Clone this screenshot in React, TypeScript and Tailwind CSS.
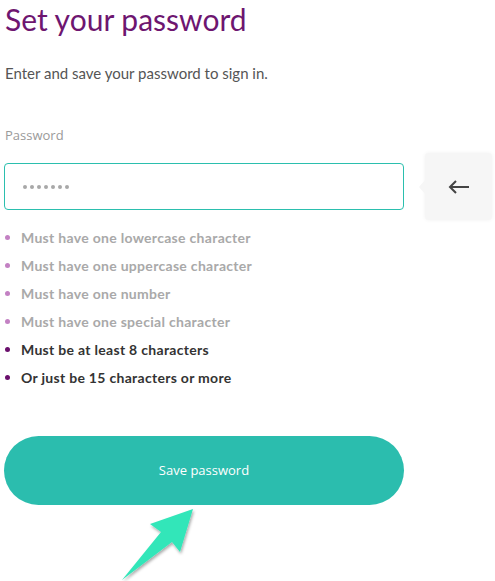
const rules = [
  { text: "Must have one lowercase character", done: false },
  { text: "Must have one uppercase character", done: false },
  { text: "Must have one number", done: false },
  { text: "Must have one special character", done: false },
  { text: "Must be at least 8 characters", done: true },
  { text: "Or just be 15 characters or more", done: true },
];

export default function App() {
  return (
    <div className="relative h-[581px] w-[495px] overflow-hidden bg-white pl-[4px] font-['Lato',sans-serif]">
      <h1 className="mt-[-3px] pl-[1px] text-[30px] leading-[44px] text-[#6e1670]">
        Set your password
      </h1>
      <p className="mt-[22px] pl-[1px] text-[15px] leading-[20px] text-[#555555]">
        Enter and save your password to sign in.
      </p>

      <label className="mt-[43px] block pl-[1px] font-['Open_Sans',sans-serif] text-[13px] leading-[18px] text-[#9a9a9a]">
        Password
      </label>

      <div className="mt-[9px] flex items-center gap-[21px]">
        <div className="flex h-[47px] w-[400px] items-center gap-[3px] rounded-[4px] border border-[#2bbfae] pl-[18px]">
          {Array.from({ length: 7 }).map((_, i) => (
            <span key={i} className="h-[4px] w-[4px] rounded-full bg-[#a8a8a8]" />
          ))}
        </div>
        <div className="relative flex h-[67px] w-[67px] items-center justify-center rounded-[4px] bg-[#f6f6f6] shadow-[0_0_4px_rgba(0,0,0,0.06)]">
          <span className="absolute left-[-6px] top-1/2 h-0 w-0 -translate-y-1/2 border-y-[7px] border-r-[6px] border-y-transparent border-r-[#f6f6f6]" />
          <svg width="22" height="14" viewBox="0 0 22 14" fill="none">
            <path d="M21 7H2" stroke="#444444" strokeWidth="2" />
            <path d="M8 1L2 7l6 6" stroke="#444444" strokeWidth="2" />
          </svg>
        </div>
      </div>

      <ul className="mt-[8px] flex flex-col gap-[10px]">
        {rules.map((r) => (
          <li key={r.text} className="flex h-[18px] items-center gap-[11px] pl-[1px]">
            <span
              className={
                r.done
                  ? "h-[5px] w-[5px] rounded-full bg-[#6a0f6c]"
                  : "h-[5px] w-[5px] rounded-full bg-[#c381c3]"
              }
            />
            <span
              className={
                r.done
                  ? "text-[14px] font-bold tracking-[0.3px] text-[#333333]"
                  : "text-[14px] font-bold tracking-[0.3px] text-[#a9a9a9]"
              }
            >
              {r.text}
            </span>
          </li>
        ))}
      </ul>

      <button className="mt-[50px] flex h-[69px] w-[400px] items-center justify-center rounded-full bg-[#2bbdae] font-['Open_Sans',sans-serif] text-[13px] text-white">
        Save password
      </button>

      <svg
        className="absolute left-[110px] top-[500px]"
        width="100"
        height="81"
        viewBox="0 0 100 81"
      >
        <defs>
          <filter id="sh" x="-20%" y="-20%" width="140%" height="140%">
            <feDropShadow dx="1" dy="2" stdDeviation="1.5" floodColor="#000" floodOpacity="0.35" />
          </filter>
        </defs>
        <polygon
          points="83,9 70,52 62,42 12,80 51,32 40,24"
          fill="#33e6b9"
          filter="url(#sh)"
        />
      </svg>
    </div>
  );
}
